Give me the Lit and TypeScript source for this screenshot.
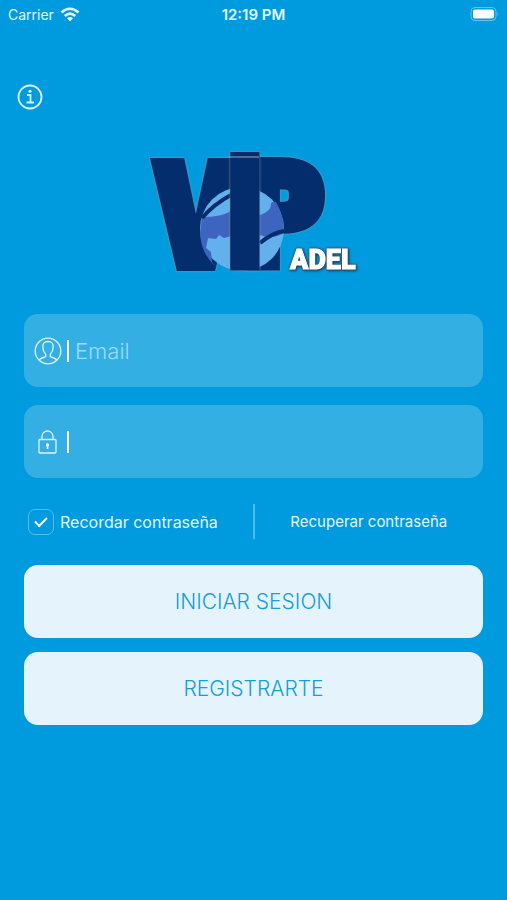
import { LitElement, html, css } from "lit";
import { customElement } from "lit/decorators.js";

@customElement("vip-logo")
class VipLogo extends LitElement {
  static styles = css`
    :host { display: block; width: 212px; height: 128px; }
    svg { display: block; width: 100%; height: 100%; overflow: visible; }
    .letter { font-family: "DejaVu Sans Mono", monospace; font-weight: 700; fill: #042d6e; stroke: #042d6e; stroke-linejoin: miter; }
    .middle { font-family: Roboto, sans-serif; font-weight: 900; }
    .edge { filter: drop-shadow(0 0 1px #8d989c); }
    .adel { font-family: Roboto, sans-serif; font-weight: 900; font-size: 27px; fill: #fff; stroke: #fff; stroke-width: 1px; filter: drop-shadow(0 0 1px #24405c) drop-shadow(1px 1px 1px #24405c); }
  `;
  render() {
    return html`<svg viewBox="148 148 212 128" role="img" aria-label="VIP Adel">
      <g class="edge"><text class="letter" x="155" y="264" font-size="136" stroke-width="14">V</text></g>
      <g class="edge"><text class="letter" x="242" y="263" font-size="134" stroke-width="16">P</text></g>
      <circle cx="242" cy="229" r="42" fill="#63b1ec" />
      <path d="M202 217 Q222 217 231 211 L260 215 Q272 211 271 203 Q276 200 277 204 Q284 216 284 233 Q272 240 260 235 L244 233 L224 238 L219 235 L216 239 L208 238 L206 248 L211 252 L212 262 L216 267 Q201 254 200 233Z" fill="#3d64bf" />
      <path d="M202 218 Q214 204 231 195 M260 243 Q272 233 284 231" fill="none" stroke="#042d6e" stroke-width="4" />
      <g class="edge"><text class="letter middle" x="220" y="270" font-size="165">I</text></g>
      <path d="M229 157h30" stroke="#9aa5c8" />
      <text class="adel" x="290" y="269">ADEL</text>
    </svg>`;
  }
}

@customElement("app-root")
class AppRoot extends LitElement {
  static styles = css`
    :host { display: block; min-height: 100vh; background: #009bde; color: #e2f5ff; font-family: Inter, "Open Sans", sans-serif; }
    * { box-sizing: border-box; }
    svg { display: block; fill: none; stroke: currentColor; }
    .status { display: grid; grid-template-columns: 1fr auto 1fr; align-items: center; height: 28px; padding: 0 8px; font-size: 14px; }
    .carrier { display: flex; align-items: center; gap: 6px; }
    .time { font-size: 15px; font-weight: 600; }
    .battery { justify-self: end; }
    .info { display: block; margin: 56px 0 0 17px; padding: 0; border: 0; background: none; color: inherit; }
    .logo { margin: 38px auto 0; }
    form { padding: 38px 24px 0; }
    .field { display: flex; align-items: center; height: 73px; padding: 0 10px; border-radius: 14px; background: #33afe4; margin-bottom: 18px; }
    .icon { width: 28px; }
    .bar { width: 2px; height: 22px; margin: 0 6px 0 5px; background: #fff; }
    .field input { flex: 1; min-width: 0; padding: 0; border: 0; outline: 0; background: none; color: #fff; font: 300 22px/28px Inter, sans-serif; }
    .field input::placeholder { color: #9bdcf8; opacity: 1; }
    .options { display: grid; grid-template-columns: 1fr 2px 1fr; align-items: center; height: 35px; margin: 26px 0; }
    .remember { display: flex; align-items: center; gap: 6px; padding-left: 4px; font-size: 16px; white-space: nowrap; }
    .remember input { appearance: none; width: 26px; height: 26px; margin: 0; border: 1px solid #56bdea; border-radius: 7px; display: grid; place-items: center; }
    .remember input:checked::before { content: ""; width: 10px; height: 5px; margin-bottom: 3px; border: solid #fff; border-width: 0 0 2px 2px; transform: rotate(-45deg); }
    .rule { height: 35px; background: #4dbaea; }
    .recover { justify-self: center; font-size: 15px; color: inherit; text-decoration: none; white-space: nowrap; }
    .action { display: block; width: 100%; height: 73px; margin: 0 0 14px; padding: 0; border: 0; border-radius: 14px; background: #e5f4fc; color: #189cdb; font: 300 21px/28px Inter, sans-serif; }
  `;
  render() {
    return html`
      <header class="status">
        <span class="carrier">Carrier
          <svg width="20" height="15" viewBox="0 0 20 15" stroke="#fff" stroke-width="2.6"><path d="M1.5 5.5Q10-2 18.500 5.500M4.800 8.900Q10 4.400 15.200 8.900" /><path d="M7 11.200Q10 8.700 13 11.200L10 14.200Z" fill="#fff" stroke="none" /></svg>
        </span>
        <span class="time">12:19 PM</span>
        <svg class="battery" width="29" height="14" viewBox="0 0 29 14"><rect x="1" y=".5" width="25" height="13" rx="4" stroke="#66c3eb" /><rect x="3" y="2.500" width="21" height="9" rx="2" fill="#fff" stroke="none" /><path d="M27.500 5q1.500 2 0 4z" fill="#66c3eb" stroke="none" /></svg>
      </header>
      <button class="info" type="button" aria-label="Información">
        <svg width="26" height="26" viewBox="0 0 26 26" stroke-width="1.800"><circle cx="13" cy="13" r="11.500" /><path d="M10 11h3.500v7.500M9.500 18.500h7.500" /><circle cx="13" cy="7.300" r="1.500" fill="currentColor" stroke="none" /></svg>
      </button>
      <vip-logo class="logo"></vip-logo>
      <form @submit=${(e: Event) => e.preventDefault()}>
        <div class="field">
          <svg class="icon" height="28" viewBox="0 0 28 28" stroke-width="1.300"><circle cx="14" cy="14" r="12.800" /><path d="M5 23Q7 21 11 20Q12.500 19 11.500 17Q9 14.500 8.800 10Q8.500 4.500 14 4.500T19.200 10Q19 14.500 16.500 17Q15.500 19 17 20Q21 21 23 23" /></svg>
          <span class="bar"></span>
          <input type="email" placeholder="Email" aria-label="Email" />
        </div>
        <div class="field">
          <svg class="icon" height="28" viewBox="0 0 28 28" stroke-width="1.300"><rect x="5" y="11.500" width="17" height="13.500" rx="1" /><path d="M8 11.500V8.500a5.500 5.500 0 0 1 11 0v3" /><circle cx="13.500" cy="17" r="1.700" fill="#fff" stroke="none" /><path d="M13.500 17v4" stroke="#fff" stroke-width="1.600" /></svg>
          <span class="bar"></span>
          <input type="password" aria-label="Contraseña" />
        </div>
        <div class="options">
          <label class="remember"><input type="checkbox" checked />Recordar contraseña</label>
          <span class="rule"></span>
          <a class="recover" href="#recuperar">Recuperar contraseña</a>
        </div>
        <button class="action" type="submit">INICIAR SESION</button>
        <button class="action" type="button">REGISTRARTE</button>
      </form>`;
  }
}
